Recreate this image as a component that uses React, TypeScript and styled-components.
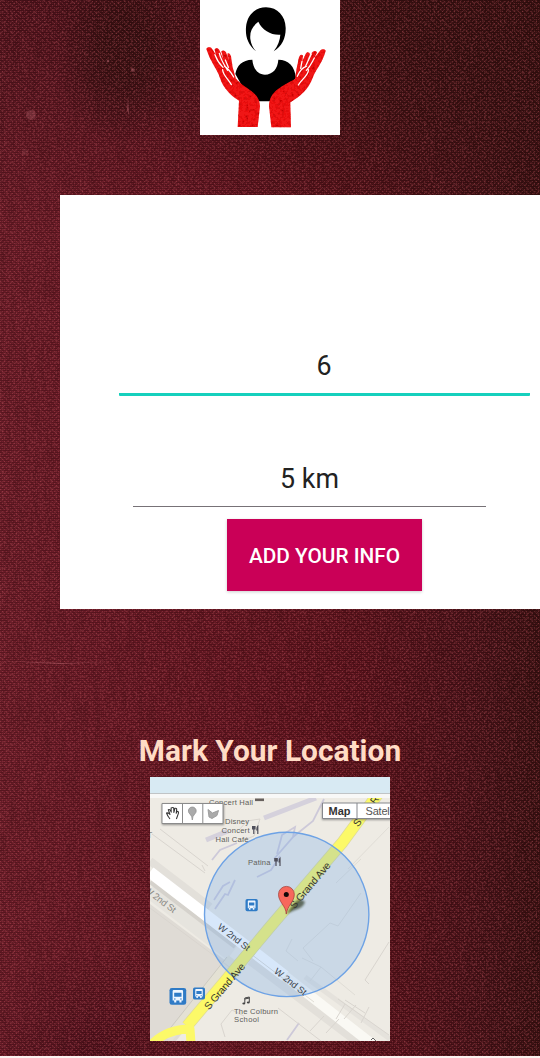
import React from "react";
import styled, { createGlobalStyle } from "styled-components";

const GlobalStyle = createGlobalStyle`
  body { margin: 0; background: #fbf3f1; font-family: Roboto, "Liberation Sans", sans-serif; }
`;

const Screen = styled.main`
  position: relative;
  isolation: isolate;
  display: flex;
  flex-direction: column;
  align-items: center;
  width: 540px;
  height: 1056px;
  overflow: hidden;
  background:
    radial-gradient(ellipse 70px 95px at 125px 50px, #2c0f0eb0 30%, #2c0f0e00 100%),
    radial-gradient(ellipse 380px 250px at 500px 20px, #32100fd0 20%, #32100f00 100%),
    linear-gradient(180deg, #350c1290 0, #350c1200 220px),
    radial-gradient(ellipse 130px 110px at 100px 1056px, #370a1480 0, #370a1400 100%),
    linear-gradient(90deg, #681b27 0, #601520 40%, #58121b 65%, #461218 87%, #361011 100%);
`;

const Cloth = styled.svg`
  position: absolute;
  inset: 0;
  z-index: -1;
`;

const LogoArt = styled.svg`
  display: block;
  flex: none;
  width: 140px;
  height: 135px;
  background: #fff;
`;

const Card = styled.section`
  box-sizing: border-box;
  display: flex;
  flex-direction: column;
  align-items: center;
  flex: none;
  align-self: flex-end;
  width: 480px;
  height: 414px;
  margin-top: 60px;
  padding-top: 152px;
  background: #fff;
`;

const Field = styled.div<{ $active?: boolean }>`
  box-sizing: border-box;
  align-self: flex-end;
  width: ${(p) => (p.$active ? 411 : 353)}px;
  height: ${(p) => (p.$active ? 49 : 43)}px;
  padding-top: ${(p) => (p.$active ? 3 : 0)}px;
  margin: ${(p) => (p.$active ? "0 10.5px 68px 0" : "0 54px 12px 0")};
  border-bottom: ${(p) => (p.$active ? "3px solid #16d0bd" : "1px solid #777277")};
  border-radius: ${(p) => (p.$active ? 1 : 0)}px;
  color: #222;
  font-size: 26.8px;
  line-height: ${(p) => (p.$active ? 32 : 30)}px;
  text-align: center;
`;

const AddButton = styled.button`
  flex: none;
  width: 195px;
  height: 72px;
  margin-left: 49px;
  padding: 2px 0 0;
  border: 0;
  background: #ca0057;
  box-shadow: 0 1px 3px #0003;
  color: #fff;
  font: 500 20.8px Roboto, sans-serif;
  white-space: nowrap;
`;

const Heading = styled.h1`
  flex: none;
  margin: 123px 0 0;
  height: 45px;
  color: #ffdcc5;
  font-size: 29.9px;
  font-weight: 700;
  line-height: 38px;
  white-space: nowrap;
`;

const MapArt = styled.svg`
  display: block;
  flex: none;
  width: 240px;
  height: 264px;
  font-family: "Liberation Sans", Arial, sans-serif;
`;

function ClothTexture() {
  return (
    <Cloth width="540" height="1056" viewBox="0 0 540 1056" aria-hidden="true">
      <defs>
        <pattern id="weave" width="4" height="4" patternUnits="userSpaceOnUse">
          <path d="M0 0.5h4M0 2.5h4" stroke="#1c0306" strokeOpacity=".2" />
          <path d="M.5 1v1M2.5 3v1" stroke="#d8606c" strokeOpacity=".28" />
        </pattern>
        <filter id="grain" x="0" y="0" width="100%" height="100%" colorInterpolationFilters="sRGB">
          <feTurbulence type="fractalNoise" baseFrequency=".45 .5" numOctaves="2" seed="8" />
          <feColorMatrix values="0 0 0 0 .76  0 0 0 0 .34  0 0 0 0 .38  1.8 0 0 0 -.82" />
        </filter>
        <filter id="threads" x="0" y="0" width="100%" height="100%" colorInterpolationFilters="sRGB">
          <feTurbulence type="fractalNoise" baseFrequency=".18 .03" numOctaves="2" seed="3" />
          <feColorMatrix values="0 0 0 0 .12  0 0 0 0 .02  0 0 0 0 .02  0 1.3 0 0 -.5" />
        </filter>
      </defs>
      <rect width="540" height="1056" fill="url(#weave)" />
      <rect width="540" height="1056" filter="url(#grain)" opacity=".55" />
      <rect width="540" height="1056" filter="url(#threads)" opacity=".22" />
      <g fill="#b96670" opacity=".5">
        <ellipse cx="31" cy="115" rx="5" ry="5" opacity=".6" />
        <circle cx="25" cy="152" r="3" opacity=".35" />
        <circle cx="133" cy="70" r="1.8" />
        <circle cx="108" cy="61" r="1.3" />
        <path d="M128 98l1 17-2-5zM0 661l65 2 45-1-50 2z" />
      </g>
    </Cloth>
  );
}

function Logo() {
  return (
    <LogoArt viewBox="0 0 420 405" role="img" aria-label="Person held by two hands">
      <defs>
        <filter id="crayon" x="0" y="0" width="100%" height="100%">
          <feTurbulence type="fractalNoise" baseFrequency=".11" numOctaves="3" seed="4" />
          <feColorMatrix values="0 0 0 0 .42  0 0 0 0 0  0 0 0 0 0  2 0 0 0 -1" result="n" />
          <feComposite in="n" in2="SourceAlpha" operator="in" result="n2" />
          <feMerge><feMergeNode in="SourceGraphic" /><feMergeNode in="n2" /></feMerge>
        </filter>
      </defs>
      <rect width="420" height="405" fill="#fff" />
      <path d="M168 154C143 132 136 109 138 82C141 45 165 23 198 22C233 22 256 49 257 83C258 112 247 140 221 154C234 138 240 120 241 104C214 106 187 91 175 65C156 80 149 95 151 117C153 131 158 143 168 154Z" fill="#000" />
      <path d="M106 222C111 196 126 180 157 179C160 208 174 223 195 224C218 223 233 207 235 179C266 179 284 199 288 233L260 265L214 304H176L130 265Z" fill="#000" />
      <g fill="#f01616" filter="url(#crayon)">
        <path d="M19 147C21 141 32 140 36 146L47 163L44 149C46 143 55 144 58 150L70 178L64 154C68 149 75 151 78 157L87 181L82 161C87 157 91 162 93 169L98 202L107 235C122 254 145 265 160 278C173 289 180 303 180 319L173 381H113L117 302C95 289 68 263 60 234C53 209 35 194 19 147Z" />
        <path d="M377 152C374 146 365 147 360 152L343 174L351 158C349 150 339 152 335 159L320 187L330 163C329 155 320 155 317 162L307 184L309 167C304 160 297 166 296 176L290 205L285 237C265 248 241 260 226 274C213 287 207 301 207 319L214 382H273L271 307C300 290 327 266 338 234C347 207 365 195 377 152Z" />
      </g>
      <path d="M45 164C51 181 57 190 69 202M58 160C63 181 71 193 83 211M76 180L85 202M68 209C67 222 86 240 94 254M74 199C86 205 94 219 101 231M343 174C334 190 331 199 319 211M334 162L317 198M306 184L302 205M325 209C328 224 304 239 295 255M319 199C303 204 297 217 292 229" fill="none" stroke="#fff" strokeWidth="3.8" strokeLinecap="round" />
    </LogoArt>
  );
}

function Bus({ x, y, size }: { x: number; y: number; size: number }) {
  return (
    <g transform={`translate(${x} ${y}) scale(${size / 16})`}>
      <rect width="16" height="16" rx="2.2" fill="#2f7bc6" />
      <path d="M4 2h8q1 0 1 1v9h-1.5v2h-2v-2h-3v2h-2v-2H3V3q0-1 1-1" fill="#eef6ff" />
      <path d="M4.5 4.5h7v4h-7zM4.3 10h1.5v1H4.3zM10.2 10h1.5v1h-1.5z" fill="#2f7bc6" />
    </g>
  );
}

function Cutlery({ x, y }: { x: number; y: number }) {
  return (
    <path
      transform={`translate(${x} ${y})`}
      d="M.3 0v3h2.4V0M1.5 0v8M5.5 8V.3Q4.6 1 4.6 4h.9"
      fill="none"
      stroke="#4f4f5a"
      strokeWidth="1.2"
    />
  );
}

function LocationMap() {
  return (
    <MapArt viewBox="0 0 240 264" role="img" aria-label="Location map">
      <defs>
        <clipPath id="ground"><rect y="20" width="240" height="244" /></clipPath>
        <filter id="soft"><feGaussianBlur stdDeviation="1.2" /></filter>
      </defs>
      <rect width="240" height="264" fill="#eeebe4" />
      <g clipPath="url(#ground)">
        <path d="M0 127L84 190L26 264H0Z" fill="#dfdbd5" />
        <path d="M0 113L82 176" fill="none" stroke="#e6e4de" strokeWidth="17" />
        <path d="M0 84L60 130M100 184L240 290" fill="none" stroke="#e3e0da" strokeWidth="8" />
        <path d="M0 105L85 170" fill="none" stroke="#d5d2cc" strokeWidth="4" />
        <path d="M0 95L135 199" fill="none" stroke="#fff" strokeWidth="11.5" />
        <path d="M135 199L222 267" fill="none" stroke="#faf9f4" strokeWidth="10" />
        <path d="M155 200L240 262" fill="none" stroke="#e5e2dc" strokeWidth="5" />
        <path d="M82 181L18 262" fill="none" stroke="#e4e1d4" strokeWidth="9" />
        <path d="M77 180L14 259" fill="none" stroke="#cdcac0" />
        <g fill="none" stroke="#d5d1dc" strokeWidth="5">
          <path d="M114 41L166 21M56 63L78 54" />
        </g>
        <g fill="none" stroke="#cdc9d9" strokeWidth="1.8">
          <path d="M62 83L70 73L87 66M127 77L132 58L145 50L143 60L124 82M143 60L163 44L174 22M107 100L121 93L130 79M65 132L75 117L78 118L85 103M64 123L73 109L80 105M137 263L149 246" />
        </g>
        <g fill="none" stroke="#d9d5cf">
          <path d="M97 44L110 42L104 59L89 65M97 44L89 53M2 57L55 96M10 52L58 89M55 94L52 88M239 165L215 203L219 207M194 242L206 228M160 254L174 239M176 256L189 242M211 246L219 230M186 242L195 227M188 222L239 258M75 260L71 247L82 233L94 239M0 131L82 192M128 231L171 264M195 223L215 236" />
        </g>
        <g fill="none" stroke="#e0ddd6">
          <path d="M163 184L153 171L180 146L188 149L211 116M198 92L239 50M181 80L226 20M186 106L211 82M152 181L171 190L205 218M160 204L171 190M97 174L164 225M142 162L136 174L148 184" />
        </g>
        <path d="M228 17L192 66L120 150L75 204L37 249" fill="none" stroke="#dedb98" strokeWidth="12" />
        <path d="M228 17L192 66L120 150L75 204L37 249" fill="none" stroke="#fcf968" strokeWidth="10.5" />
        <path d="M2 267Q17 252 40 252L41 266" fill="none" stroke="#fcf968" strokeWidth="9" strokeLinejoin="round" />
        <circle cx="136.7" cy="137.4" r="82.2" fill="#6ba8ed" fillOpacity=".27" stroke="#6da2e5" strokeWidth="1.4" />
        <g fontSize="7.6" fill="#605e5a">
          <text x="59" y="28" textLength="44">Concert Hall</text>
          <text x="75" y="47.3" textLength="24">Disney</text>
          <text x="71.5" y="56.2" textLength="28">Concert</text>
          <text x="65.5" y="65.2" textLength="33">Hall Café</text>
          <text x="98" y="87.7" textLength="22.5">Patina</text>
          <text x="84" y="236.6" textLength="44">The Colburn</text>
          <text x="84" y="245.2" textLength="25">School</text>
        </g>
        <path d="M105 21.5h9v2.6h-9z" fill="#67605d" />
        <Cutlery x={102.3} y={49} />
        <Cutlery x={124.5} y={81} />
        <path d="M136 137L145 125Q150 120 155 125Q153 131 145 133Z" fill="#263018" opacity=".65" filter="url(#soft)" />
        <g fontSize="10.4" fill="#39392f">
          <text transform="translate(144.5 132.5) rotate(-50)" textLength="57">S Grand Ave</text>
          <text transform="translate(59 233.5) rotate(-50)" textLength="57">S Grand Ave</text>
          <text transform="translate(208 50.5) rotate(-52)">S</text>
          <text transform="translate(225 28) rotate(-52)">R</text>
        </g>
        <g fontSize="9.4" fill="#3c454f">
          <text transform="translate(67 151) rotate(38)" textLength="38">W 2nd St</text>
          <text transform="translate(123.5 195.5) rotate(38)" textLength="38">W 2nd St</text>
          <text transform="translate(-6.5 114) rotate(37)" textLength="37" fill="#8b8984">W 2nd St</text>
          <text x="-3" y="61" fontSize="8.5" fill="#8b8984">T</text>
        </g>
        <Bus x={95.5} y={122} size={12.3} />
        <Bus x={43} y={210.5} size={12} />
        <Bus x={19.5} y={211} size={16.7} />
        <path d="M94.8 226v-5l4.5-1v5M94.8 222l4.5-1" fill="none" stroke="#444" />
        <ellipse cx="93.8" cy="226.5" rx="1.5" ry="1.1" fill="#444" />
        <ellipse cx="98.3" cy="225.5" rx="1.5" ry="1.1" fill="#444" />
        <path d="M136.3 137C136 129 128.5 125 128.5 117.3A7.9 7.9 0 0 1 144.3 117.3C144.3 125 137 129 136.3 137Z" fill="#f7685c" stroke="#a8443e" strokeWidth=".8" />
        <circle cx="136.3" cy="117.5" r="2.5" fill="#110808" />
        <path d="M221 263l2-2 3 3" stroke="#666" fill="none" />
      </g>
      <rect width="240" height="16" fill="#d8eaf3" />
      <path d="M0 16.5h240" stroke="#c0c4c6" />
      <rect y="17" width="240" height="4" fill="#f8f8f7" />
      <rect x="12" y="27" width="62" height="21" fill="#555" opacity=".6" filter="url(#soft)" />
      <path d="M12 26.5h61v20H12zM32.5 26.5v20M52.8 26.5v20" fill="#fff" stroke="#8b8b8b" />
      <path d="M20 42q-2.5-3-3.5-6 2-.5 3.5 1.5l-1.7-4.8q1.8-1 2.9 2.5l-.1-4.2q2-1 2.6 0l.2 4.5 1-4.2q1.8-.3 1.8 1l-.5 4 1-2q1.6 0 1.2 2l-2 5.7" fill="#fff" stroke="#333" strokeWidth="1.05" strokeLinejoin="round" />
      <path d="M42.3 43q-.2-4-2.4-6a3.9 3.9 0 1 1 4.8 0q-2.2 2-2.4 6" fill="#aaa" stroke="#8a8a8a" strokeWidth=".7" />
      <path d="M58 32.5l4.5 3.5 6-2.5-1.5 5-5 3-3-1.5z" fill="#aaa" stroke="#999" strokeWidth=".9" />
      <path d="M172 28h70v15h-70z" fill="#555" opacity=".6" filter="url(#soft)" />
      <path d="M172.5 26h70v15.5h-70zM207 26v15.5" fill="#fff" stroke="#85878c" />
      <g fontSize="11" fill="#333">
        <text x="178.5" y="38" fontWeight="700" textLength="22">Map</text>
        <text x="215.5" y="38" fill="#555" textLength="24.3">Satel</text>
      </g>
    </MapArt>
  );
}

export default function App() {
  return (
    <>
      <GlobalStyle />
      <Screen>
        <ClothTexture />
        <Logo />
        <Card>
          <Field $active>6</Field>
          <Field>5 km</Field>
          <AddButton>ADD YOUR INFO</AddButton>
        </Card>
        <Heading>Mark Your Location</Heading>
        <LocationMap />
      </Screen>
    </>
  );
}
